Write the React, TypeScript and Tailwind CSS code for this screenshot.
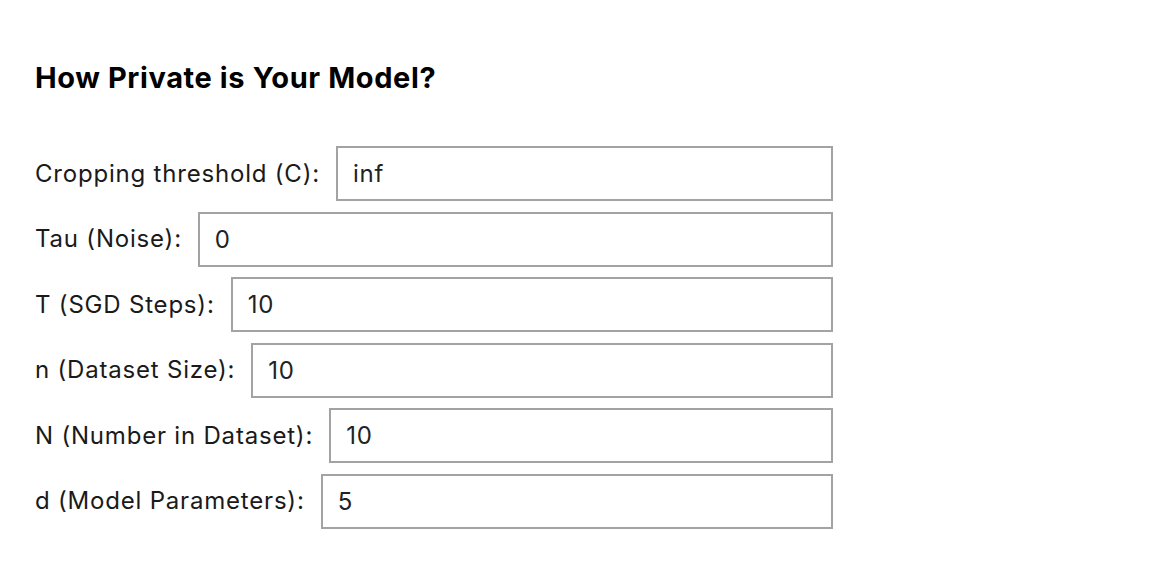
import React from "react";

const fields: { label: string; value: string }[] = [
  { label: "Cropping threshold (C):", value: "inf" },
  { label: "Tau (Noise):", value: "0" },
  { label: "T (SGD Steps):", value: "10" },
  { label: "n (Dataset Size):", value: "10" },
  { label: "N (Number in Dataset):", value: "10" },
  { label: "d (Model Parameters):", value: "5" },
];

export default function App() {
  return (
    <div
      className="min-h-screen bg-white pl-[35px] pt-[60px] text-black"
      style={{ fontFamily: "Inter, 'Noto Sans', sans-serif" }}
    >
      <h2 className="text-[29px] font-bold leading-[36px] tracking-[0.6px]">How Private is Your Model?</h2>
      <div className="mt-[50px] flex w-[798px] flex-col gap-[10.6px]">
        {fields.map((f) => (
          <div key={f.label} className="flex items-center gap-[16px]">
            <label className="whitespace-nowrap text-[24px] leading-[30px] tracking-[0.8px] text-[#1a1a1a]">
              {f.label}
            </label>
            <input
              defaultValue={f.value}
              className="h-[55px] flex-1 border-2 border-[#a3a3a3] px-[15px] text-[24px] tracking-[0.8px] text-[#222] outline-none"
              style={{ fontFamily: "Inter, 'Noto Sans', sans-serif" }}
            />
          </div>
        ))}
      </div>
    </div>
  );
}
